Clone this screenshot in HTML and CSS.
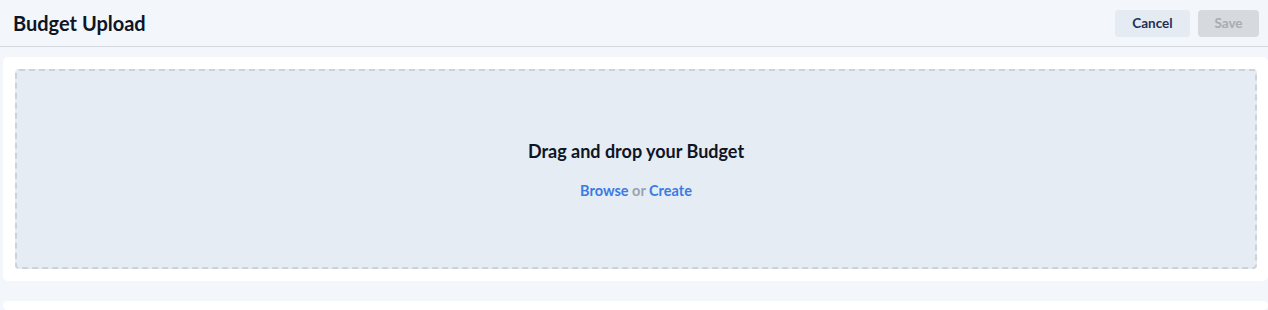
FILE: index.html
```html
<!DOCTYPE html>
<html lang="en">

<head>
    <meta charset="UTF-8">
    <meta name="viewport" content="width=device-width, initial-scale=1.0">
    <title>Budget Upload</title>
    <link rel="stylesheet" href="styles.css">
</head>

<body>
    <div class="header">
        <h1 class="title">Budget Upload</h1>
        <div class="actions">
            <button class="btn btn-cancel">Cancel</button>
            <button class="btn btn-save" disabled>Save</button>
        </div>
    </div>
    <div class="content">
        <div class="card">
            <div class="dropzone">
                <p class="drop-title">Drag and drop your Budget</p>
                <p class="drop-links"><a href="#">Browse</a> or <a href="#">Create</a></p>
            </div>
        </div>
        <div class="card card-empty"></div>
    </div>
</body>

</html>
```

FILE: styles.css
```css
body {
    font-family: Lato, "Noto Sans", sans-serif;
    margin: 0;
    background-color: #f3f6fa;
    color: #0d1526;
    overflow: hidden;
}

.header {
    height: 46px;
    display: flex;
    align-items: center;
    justify-content: space-between;
    padding: 0 9px 0 13px;
    border-bottom: 1px solid #d3d8df;
    background-color: #f3f6fa;
}

.title {
    margin: 0 0 1px;
    font-size: 20px;
    font-weight: 700;
}

.actions {
    display: flex;
    gap: 8px;
}

.btn {
    font-family: inherit;
    font-size: 13.5px;
    font-weight: 700;
    height: 27px;
    border: none;
    border-radius: 4px;
    padding: 0;
    cursor: pointer;
}

.btn-cancel {
    width: 75px;
    background-color: #e5ebf3;
    color: #1e2f55;
}

.btn-save {
    width: 61px;
    background-color: #d6d9de;
    color: #a8acb3;
    cursor: default;
}

.content {
    padding: 10px 0 0 3px;
    display: flex;
    flex-direction: column;
    gap: 20px;
}

.card {
    background-color: #fff;
    border-radius: 5px;
    padding: 12px 11px 12px 12px;
}

.card-empty {
    height: 9px;
    padding: 0;
}

.dropzone {
    height: 196px;
    background-color: #e6ecf4;
    border: 2px dashed #cdd2d9;
    border-radius: 4px;
    display: flex;
    flex-direction: column;
    align-items: center;
}

.drop-title {
    margin: 69px 0 0;
    font-size: 18px;
    line-height: 22px;
    font-weight: 700;
}

.drop-links {
    margin: 20px 0 0;
    font-size: 14.5px;
    line-height: 17px;
    font-weight: 700;
    color: #99a3b1;
}

.drop-links a {
    color: #3a7be2;
    text-decoration: none;
}
```
